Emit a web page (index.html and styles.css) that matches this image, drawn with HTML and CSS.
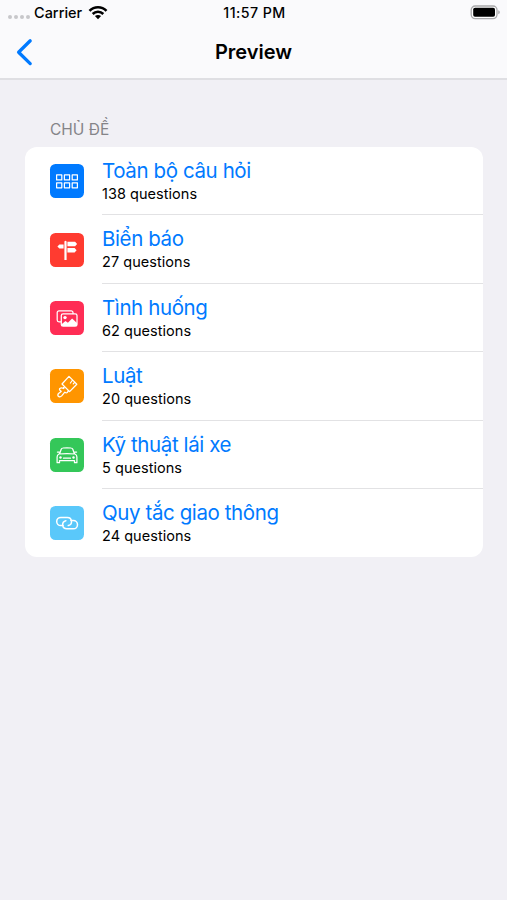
FILE: index.html
```html
<!DOCTYPE html>
<html lang="vi">
<head>
<meta charset="utf-8">
<title>Preview</title>
<link rel="stylesheet" href="styles.css">
</head>
<body>
<header class="top">
  <div class="status">
    <div class="carrier">
      <span class="dots"><i></i><i></i><i></i><i></i></span>
      <span class="carrier-name">Carrier</span>
      <svg class="wifi" width="20" height="15" viewBox="0 0 20 15" fill="none" stroke="#000" stroke-width="2.6"><path d="M1.5 5.8C6.3 1 13.7 1 18.5 5.8M4.7 9C7.7 6 12.3 6 15.3 9"/><path d="M10 14.2 6.9 11.1C8.7 9.5 11.3 9.5 13.1 11.1Z" fill="#000" stroke="none"/></svg>
    </div>
    <div class="time">11:57 PM</div>
    <svg class="battery" width="31" height="15" viewBox="0 0 31 15"><rect x="1.2" y="1" width="25.8" height="12.6" rx="4" fill="#fff" stroke="#a9a9ab" stroke-width="1.3"/><rect x="3.2" y="2.8" width="21.8" height="9" rx="1.8"/><path d="M28.4 5.3c1.7.6 1.7 3.4 0 4z" fill="#99999b"/></svg>
  </div>
  <nav class="nav">
    <svg class="back" width="18" height="28" viewBox="0 0 18 28" fill="none" stroke="#007aff" stroke-width="3.3" stroke-linecap="round" stroke-linejoin="round"><path d="M15.2 2.8 3.6 14.2 15.2 25.6"/></svg>
    <h1 class="heading">Preview</h1>
  </nav>
</header>
<main class="content">
  <h2 class="section">CHỦ ĐỀ</h2>
  <ul class="card">
    <li class="row">
      <span class="icon blue"><svg viewBox="0 0 34 34"><path d="M6.6 10.9h5.2v5H6.6zM14.4 10.9h5.2v5h-5.2zM22.2 10.9h5.2v5h-5.2zM6.6 18.8h5.2v5H6.6zM14.4 18.8h5.2v5h-5.2zM22.2 18.8h5.2v5h-5.2z"/></svg></span>
      <div class="text"><span class="title">Toàn bộ câu hỏi</span><span class="count">138 questions</span></div>
    </li>
    <li class="row">
      <span class="icon red"><svg viewBox="0 0 34 34"><path class="solid" d="M14.4 8.4q1.1-1.2 2.2 0v18.5h-2.2zM17.4 8.7h7.7l2 2.3-2 2.3h-7.7zM13.6 11.4v4.2H9.4l-2-2.1 2-2.1zM17.4 15h7.2l2 2.2-2 2.2h-7.2z"/></svg></span>
      <div class="text"><span class="title">Biển báo</span><span class="count">27 questions</span></div>
    </li>
    <li class="row">
      <span class="icon pink"><svg viewBox="0 0 34 34"><path d="M11 20.8H9a1.8 1.8 0 0 1-1.8-1.8v-7.4A1.8 1.8 0 0 1 9 9.8h12.2a1.8 1.8 0 0 1 1.8 1.8v1"/><rect x="11.3" y="12.8" width="15.7" height="12.4" rx="1.8"/><circle class="solid" cx="15" cy="16.6" r="1.7"/><path class="solid" d="m11.5 23.2 4-3.1 2.4 1.7 4.2-4.2 4.9 4.3v3.2H11.5z"/></svg></span>
      <div class="text"><span class="title">Tình huống</span><span class="count">62 questions</span></div>
    </li>
    <li class="row">
      <span class="icon orange"><svg viewBox="0 0 34 34"><path d="M19 7.4 26.8 15.2 19.6 22.6 12 15ZM22.6 11l-2.2 3M24.7 13.1l-1.4 1.8M13.8 16.8 13.8 19.5Q11.5 18.1 9.8 19.4 8.7 20.8 11.2 22.4L8.5 24.5Q7.1 26.3 8.6 27.4 10.2 28.4 11.7 26.9L14.8 23.2Q16.4 24.4 17.4 23.3T18.1 21.1"/></svg></span>
      <div class="text"><span class="title">Luật</span><span class="count">20 questions</span></div>
    </li>
    <li class="row">
      <span class="icon green"><svg viewBox="0 0 34 34"><path d="m9.6 15.8 1.6-4.5q.5-1.2 1.8-1.3 4-.4 8 0 1.3.1 1.8 1.3l1.6 4.5M8.9 16q8.1-.7 16.2 0 1.8.8 1.8 3v5.7h-2.4v-2.1h-15v2.1H7.1V19q0-2.2 1.8-3zM7.4 14h1.8M24.8 14h1.8M13.5 20.2h7"/><circle class="solid" cx="10.5" cy="19.5" r="1.2"/><circle class="solid" cx="23.5" cy="19.5" r="1.2"/></svg></span>
      <div class="text"><span class="title">Kỹ thuật lái xe</span><span class="count">5 questions</span></div>
    </li>
    <li class="row">
      <span class="icon sky"><svg viewBox="0 0 34 34"><path class="thick" d="M13.2 19.6h-2.4a4.1 4.1 0 0 1 0-8.2h6.6a4.1 4.1 0 0 1 .9 8.1M20.8 14.6h2.6a4.1 4.1 0 0 1 0 8.2h-6.6a4.1 4.1 0 0 1-.9-8.1"/></svg></span>
      <div class="text"><span class="title">Quy tắc giao thông</span><span class="count">24 questions</span></div>
    </li>
  </ul>
</main>
</body>
</html>
```
FILE: styles.css
```css
* { box-sizing: border-box; }
body {
  margin: 0;
  min-height: 900px;
  background: #f1f0f5;
  color: #000;
  font-family: Inter, "Noto Sans", sans-serif;
}
.top {
  height: 80px;
  background: #fafafc;
  border-bottom: 2px solid #dfdfe3;
}
.status {
  display: grid;
  grid-template-columns: 1fr auto 1fr;
  align-items: center;
  height: 26px;
  padding: 0 6px 0 8px;
}
.carrier { display: flex; align-items: center; }
.dots { display: flex; gap: 2px; padding-top: 8px; }
.dots i { width: 4px; height: 4px; border-radius: 50%; background: #c7c7ca; }
.carrier-name { margin-left: 4px; width: 50px; font-size: 14.5px; font-weight: 500; line-height: 18px; white-space: nowrap; }
.wifi { margin-left: 4px; margin-top: -1px; }
.time { font-size: 14.2px; font-weight: 500; line-height: 18px; letter-spacing: .45px; white-space: nowrap; }
.battery { justify-self: end; margin-top: -1px; }
.nav {
  display: grid;
  grid-template-columns: 1fr auto 1fr;
  align-items: center;
  height: 52px;
  padding: 0 15px;
}
.heading { margin: 0; font-size: 20px; font-weight: 600; line-height: 28px; }
.content { padding: 39px 24.5px 0 25px; }
.section {
  margin: 0;
  padding-left: 25px;
  height: 28px;
  font-size: 15.5px;
  line-height: 21px;
  font-weight: 400;
  color: #858489;
}
.card {
  margin: 0;
  padding: 0;
  list-style: none;
  background: #fff;
  border-radius: 12px;
  overflow: hidden;
}
.row { display: flex; align-items: center; height: 68.4px; padding-left: 25px; }
.icon { width: 34px; height: 34px; border-radius: 5.5px; flex: none; }
.icon svg { display: block; width: 34px; height: 34px; fill: none; stroke: #fff; stroke-width: 1.25; stroke-linecap: round; stroke-linejoin: round; }
.icon .solid { fill: #fff; stroke: none; }
.icon .thick { stroke-width: 1.5; }
.blue { background: #007aff; }
.red { background: #ff3b30; }
.pink { background: #ff2d55; }
.orange { background: #ff9500; }
.green { background: #34c759; }
.sky { background: #5ac8fa; }
.text {
  display: flex;
  flex-direction: column;
  flex: 1;
  height: 100%;
  margin-left: 18px;
  padding-top: 10px;
  border-bottom: 1px solid #e2e2e4;
}
.row:last-child .text { border-bottom: 0; }
.title { font-size: 20.5px; line-height: 27px; letter-spacing: -.4px; color: #007aff; white-space: nowrap; }
.count { font-size: 14.5px; line-height: 20px; letter-spacing: .04px; white-space: nowrap; }
```
